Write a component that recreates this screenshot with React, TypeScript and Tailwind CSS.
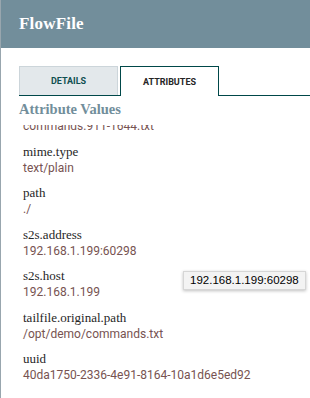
import React from 'react';

const attributes = [
  { name: 'tailfile.original.path', value: 'commands.911-1644.txt' },
  { name: 'mime.type', value: 'text/plain' },
  { name: 'path', value: './' },
  { name: 's2s.address', value: '192.168.1.199:60298' },
  { name: 's2s.host', value: '192.168.1.199' },
  { name: 'tailfile.original.path', value: '/opt/demo/commands.txt' },
  { name: 'uuid', value: '40da1750-2336-4e91-8164-10a1d6e5ed92' },
];

export default function App() {
  return (
    <div className="relative w-[310px] h-[398px] overflow-hidden bg-white border-l border-[#98a6ae]">
      {/* Dialog header */}
      <div className="h-[48px] bg-[#728e9b] pl-[18px] flex items-center">
        <h1 className="text-white font-bold text-[17px] font-['Liberation_Serif',serif] tracking-[0.2px]">FlowFile</h1>
      </div>

      {/* Tabs */}
      <div className="ml-[18px] mt-[19px] flex items-end gap-[2px] border-b border-[#004849] h-[29px]">
        <div className="w-[99px] h-[29px] bg-[#e3e8eb] border border-b-0 border-[#ccd5da] flex items-center justify-center pt-[2px]">
          <span className="text-[9px] font-bold text-[#0f4f50] font-['Roboto',sans-serif]">DETAILS</span>
        </div>
        <div className="w-[99px] h-[30px] -mb-px bg-white border border-b-0 border-[#004849] flex items-center justify-center pt-[2px]">
          <span className="text-[9px] font-bold text-[#262626] font-['Roboto',sans-serif]">ATTRIBUTES</span>
        </div>
      </div>

      {/* Attribute list */}
      <div className="h-[29px] pl-[18px] pt-[4px]">
        <h2 className="text-[14.5px] leading-[18px] font-bold text-[#728e9b] font-['Liberation_Serif',serif]">Attribute Values</h2>
      </div>
      <div className="h-[272px] overflow-hidden pl-[22px]">
        <div className="-mt-[23px]">
          {attributes.map((attr, i) => (
            <div key={i} className="pb-[9.5px]">
              <div className="text-[13px] leading-[16px] text-[#262626] font-['Liberation_Serif',serif]">{attr.name}</div>
              <div className="text-[12px] leading-[16px] text-[#775351] font-['Roboto',sans-serif]">{attr.value}</div>
            </div>
          ))}
        </div>
      </div>

      {/* Tooltip */}
      <div className="absolute left-[182px] top-[271px] h-[19px] px-[6px] flex items-center bg-[#f3f3f3] border border-[#d6d6d6] shadow-[0_1px_3px_rgba(0,0,0,0.25)]">
        <span className="text-[11.5px] text-black font-['Liberation_Sans',sans-serif]">192.168.1.199:60298</span>
      </div>
    </div>
  );
}
